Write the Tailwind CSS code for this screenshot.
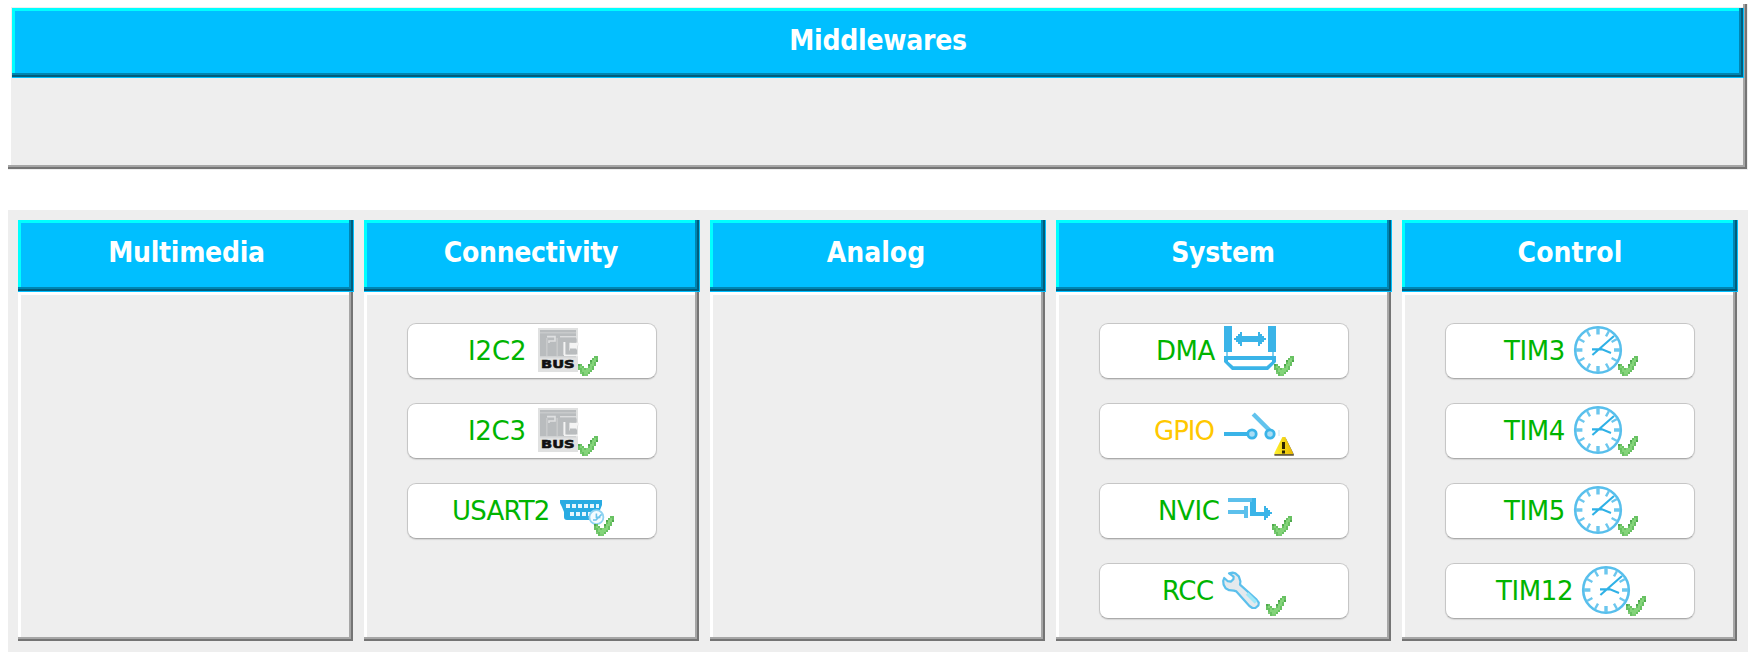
<!DOCTYPE html>
<html lang="en">
<head>
<meta charset="utf-8">
<title>Configuration</title>
<script src="https://cdn.jsdelivr.net/npm/@tailwindcss/browser@4"></script>
</head>
<body class="bg-white h-[662px] overflow-hidden">
<svg class="absolute w-0 h-0">
  <defs>
    <linearGradient id="gold" x1="0" x2="1" y1="0" y2="0"><stop offset="0" stop-color="#fff22e"/><stop offset="1" stop-color="#e8b800"/></linearGradient>
    <symbol id="check" viewBox="0 0 10 10" overflow="visible">
      <g shape-rendering="crispEdges">
        <path fill="#68c162" d="M8 0h2v1h-2zM7 1h3v1h-3zM6 2h4v1h-4zM6 3h3v1h-3zM0 4h2v1h-2zM5 4h4v1h-4zM0 5h3v1h-3zM5 5h3v1h-3zM0 6h8v1h-8zM1 7h6v1h-6zM1 8h5v1h-5zM2 9h3v1h-3z"/>
        <path fill="#84d47a" d="M8 1h1v1h-1zM7 2h2v1h-2zM7 3h1v1h-1zM6 4h2v1h-2zM1 5h1v1h-1zM6 5h1v1h-1zM2 6h1v1h-1zM4 6h3v1h-3zM2 7h4v1h-4zM3 8h2v1h-2z"/>
        <path fill="#4fa94d" d="M0 4h1v1h-1zM6 2h1v1h-1zM9 2h1v1h-1zM5 4h1v1h-1z"/>
        <path fill="#7ccb75" d="M1 8h1v1h-1zM3 9h2v1h-2z"/>
      </g>
    </symbol>
    <symbol id="i2c" viewBox="0 0 30 25" overflow="visible">
      <path fill="#e0e1e1" d="M0 1h20v22h-20z"/>
      <path fill="#b9bcbe" d="M1 2h18v13h-18z"/>
      <path fill="#c8cacb" d="M1 3h18v.8h-18zM4 6h.8v9h-.8zM9.200 6h.8v9h-.8z"/>
      <path fill="none" stroke="#dfe0e1" stroke-width=".8" d="M4.500 5.300h4v2.200h-3v1"/>
      <path fill="#f4f4f4" d="M12.700 8h1v6.500h-1zM16 8.400h4.500v1.400h-1v1.400h-3.500v1h-1v-3.800zM13 14.300h7v.8h-7z"/>
      <path fill="#dcddde" d="M11 5h8v.7h-8z"/>
      <path fill="#b9bcbe" d="M14.300 6.300h5v2h-2.600v-.5h-1v5h1v-1h2.800v2.300h-5.200z"/>
      <path fill="#d0d2d3" d="M1 15h18v.8h-18z"/>
      <text x="1.500" y="21.200" textLength="16.800" lengthAdjust="spacingAndGlyphs" font-family="DejaVu Sans" font-weight="bold" font-size="5.500" fill="#111" stroke="#111" stroke-width=".3">BUS</text>
      <use href="#check" x="20" y="15" width="10" height="10"/>
    </symbol>
    <symbol id="usart" viewBox="0 0 27 25" overflow="visible">
      <path fill="#29abe2" d="M0 7h21v2.500l-1 2.500-1 5h-15.500q-1.500 0-1.500-1.500v-2.500l-1-2.500-1-2z"/>
      <path fill="#e6f6fd" d="M3 9h2v2h-2zM6 9h2v2h-2zM9 9h2v2h-2zM12 9h2v2h-2zM15 9h2v2h-2zM18 9h1.500v2h-1.500zM5 13h2v2h-2zM8 13h2v2h-2zM11 13h2v2h-2zM14 13h1.500v2h-1.500z"/>
      <circle cx="18.200" cy="15.600" r="3.500" fill="#f4fbff" stroke="#8fd3f2" stroke-width=".9"/>
      <path fill="none" stroke="#6cc4ec" stroke-width=".8" d="M18.200 13.700v2h2M16.500 17h1.500l2.800-2.800"/>
      <use href="#check" x="17" y="15" width="10" height="10"/>
    </symbol>
    <symbol id="dma" viewBox="0 0 35 25" overflow="visible">
      <g fill="#3ab4e8" shape-rendering="crispEdges">
        <path d="M0 0h4v13h-4zM22 0h4v13h-4zM7 5h12v3h-12z"/>
        <path d="M5 6h1v-1h1v-1h1v-1h1v7h-1v-1h-1v-1h-1v-1h-1zM21 6h-1v-1h-1v-1h-1v-1h-1v7h1v-1h1v-1h1v-1h1z"/>
        <path fill="#7fcff0" d="M1 13h1v2h-1zM24 13h1v2h-1z"/>
      </g>
      <path d="M0 15h26v3l-4 4h-18l-4-4zM2 17v.7l2.700 2.400h16.600l2.700-2.400v-.7z" fill="#3ab4e8" fill-rule="evenodd"/>
      <use href="#check" x="25" y="15" width="10" height="10"/>
    </symbol>
    <symbol id="gpio" viewBox="0 0 35 25" overflow="visible">
      <path d="M0 14h12" stroke="#3ab4e8" stroke-width="2"/>
      <path d="M14.600 4l8 8" stroke="#62c3ed" stroke-width="2.200"/>
      <circle cx="14" cy="14" r="2.100" fill="#a8ddf5" stroke="#3ab4e8" stroke-width="1.400"/>
      <circle cx="23" cy="14" r="2.100" fill="#a8ddf5" stroke="#3ab4e8" stroke-width="1.400"/>
      <path fill="#e3f3fb" d="M27 12h1v3h-1z"/>
      <path fill="#6a6674" d="M30.500 15.300l4.500 9h-2z"/>
      <path fill="url(#gold)" d="M29.200 15.500h1.400l3.900 8v.8h-9.300v-.8z"/>
      <path fill="#6b6040" d="M25.200 24h9.700v.9h-9.700z"/>
      <path fill="#2c2400" d="M29 18h1.500v3.500h-1.500zM29 22.200h1.500v1.500h-1.500z"/>
    </symbol>
    <symbol id="nvic" viewBox="0 0 32 25" overflow="visible">
      <g shape-rendering="crispEdges">
        <path fill="#5cc0ec" d="M0 6h14v2h-14zM0 12h8v2h-8zM8 10h2v6h-2z"/>
        <path fill="#3ab4e8" d="M11 8h1v-2h2v7h4v-3h1v1h1v1h1v1h1v1h-1v1h-1v1h-1v1h-1v-2h-7z"/>
      </g>
      <use href="#check" x="22" y="15" width="10" height="10"/>
    </symbol>
    <symbol id="rcc" viewBox="0 0 32 25" overflow="visible">
      <path d="M3.500 3.700l1.800-.4 1.400.4 1.700 1.500.8 2.500-.2 1.600 8 7.200 1.400 1.800-.2 1.400-1.500 1.300h-1.500l-1.500-1-6.500-7.300-1.300-.4-2.300-.2-1.800-1-1-1.800-.2-1.900.5-1.400 1.800 1.600 1.500.2 1.300-1.200.1-1.300z" fill="#e4e9ed" stroke="#5cc0ec" stroke-width="1.100" stroke-linejoin="round"/>
      <path d="M12.500 13.800l4.500 4.500" stroke="#9fe8f8" stroke-width="1.800"/>
      <use href="#check" x="22" y="15" width="10" height="10"/>
    </symbol>
    <symbol id="tim" viewBox="0 0 32 25" overflow="visible">
      <circle cx="12" cy="12" r="11.400" fill="#fff" stroke="#58bfec" stroke-width="1.300"/>
      <g stroke="#6cc7ee" stroke-width="1.700">
        <path d="M12 1v3.200M12 20v3M1 12h3.200M20 12h3"/>
        <path stroke-width="1.200" d="M6.500 2.500l1.500 2.700M17.500 2.500l-1.500 2.700M2.500 6.500l2.700 1.500M21.500 6.500l-2.700 1.500M2.500 17.500l2.700-1.500M21.500 17.500l-2.700-1.500M6.500 21.500l1.500-2.700M17.500 21.500l-1.500-2.700"/>
      </g>
      <path fill="none" stroke="#2fb1e6" stroke-width="1.050" d="M9.200 14.500l10.800-9.500M9 11.700h5l4.500 1.800"/>
      <use href="#check" x="22" y="15" width="10" height="10"/>
    </symbol>
  </defs>
</svg>

<main class="pl-2 pt-1 flex flex-col font-['DejaVu_Sans_Condensed','DejaVu_Sans',sans-serif]">
  <section class="w-[1740px] h-[166px] pl-1 pr-1 pt-1 bg-[#eeeeee] shadow-[inset_0_-1px_0_#eeeeee,inset_-1px_0_0_#eeeeee,inset_-3px_-3px_0_#747474,inset_-5px_-5px_0_#a6a6a6,inset_3px_3px_0_#ffffff]">
    <h2 class="w-[1732px] h-[70px] pb-[4px] flex items-center justify-center bg-[#00bfff] text-white font-bold text-[28px] shadow-[inset_-1px_-1px_0_#00bfff,inset_-3px_-3px_0_#005d7c,inset_-5px_-5px_0_#0085b2,inset_3px_3px_0_#00ffff]"><span class="tracking-[-0.25px]">Middlewares</span></h2>
  </section>

  <section id="columns" class="mt-10 w-[1740px] h-[442px] bg-[#eeeeee] p-[10px] flex gap-[10px]"></section>
</main>

<script>
const columns = [
  ['Multimedia', -0.3, 1, []],
  ['Connectivity', -0.3, -2, [['I2C2', 'i2c', 61, 131, 30, -0.1], ['I2C3', 'i2c', 61, 131, 30, -0.3], ['USART2', 'usart', 45, 153, 27, -0.8]]],
  ['Analog', 0, -4, []],
  ['System', -0.2, -2, [['DMA', 'dma', 57, 125, 35, -0.5], ['GPIO', 'gpio', 55, 125, 35, -1], ['NVIC', 'nvic', 59, 129, 32, -0.4], ['RCC', 'rcc', 63, 123, 32, -0.5]]],
  ['Control', 0.1, 0, [['TIM3', 'tim', 59, 129, 32, -0.4], ['TIM4', 'tim', 59, 129, 32, -0.4], ['TIM5', 'tim', 59, 129, 32, -0.4], ['TIM12', 'tim', 51, 137, 32, -0.4]]],
];
document.getElementById('columns').innerHTML = columns.map(([title, track, shift, items]) => `
  <div class="w-[336px] h-[422px] flex flex-col">
    <h2 class="h-[72px] pb-[6px] flex items-center justify-center bg-[#00bfff] text-white font-bold text-[28px] shadow-[inset_-1px_-1px_0_#00bfff,inset_-3px_-3px_0_#005d7c,inset_-5px_-5px_0_#0085b2,inset_3px_3px_0_#00ffff]"><span style="letter-spacing:${track}px;margin-left:${shift}px">${title}</span></h2>
    <div class="h-[350px] pt-[31px] pl-[43px] flex flex-col gap-6 bg-[#eeeeee] shadow-[inset_-1px_-1px_0_#eeeeee,inset_-3px_-3px_0_#747474,inset_-5px_-5px_0_#a6a6a6,inset_3px_3px_0_#ffffff]">
      ${items.map(([name, icon, left, iconX, units, ls]) => `
      <button type="button" class="w-[250px] h-14 flex items-center rounded-[9px] bg-white border border-[#c6c6c6] border-b-[#ababab] shadow-[0_1px_1px_#d4d4d4] font-['DejaVu_Sans',sans-serif] text-[26px] leading-none ${icon === 'gpio' ? 'text-[#ffc800]' : 'text-[#00b400]'}">
        <span class="shrink-0 text-left whitespace-nowrap" style="margin-left:${left - 1}px;width:${iconX - left}px;letter-spacing:${ls}px">${name}</span>
        <svg class="h-[50px] shrink-0 overflow-visible" style="width:${units * 2}px" viewBox="0 0 ${units} 25"><use href="#${icon}" width="${units}" height="25"/></svg>
      </button>`).join('')}
    </div>
  </div>`).join('');
</script>
</body>
</html>
